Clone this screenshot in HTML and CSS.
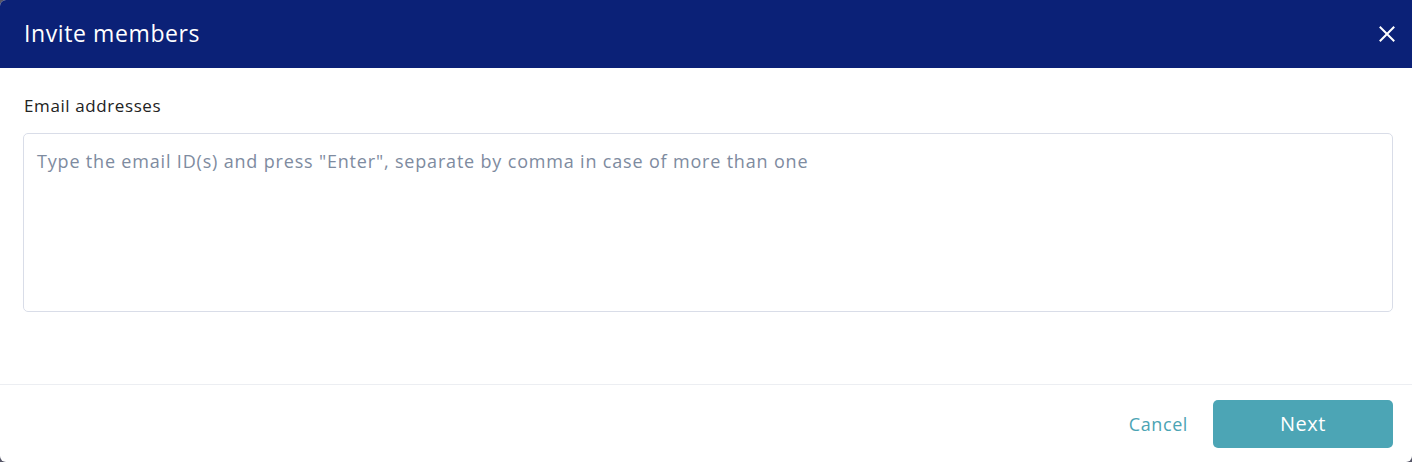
FILE: index.html
```html
<!DOCTYPE html>
<html lang="en">
<head>
    <meta charset="UTF-8">
    <title>Invite members</title>
    <link rel="stylesheet" href="styles.css">
</head>
<body>

<div class="modal">
    <div class="modal-header">
        <h1>Invite members</h1>
        <button class="close-btn" aria-label="Close">
            <svg width="16" height="16" viewBox="0 0 16 16">
                <path d="M1.5 1.5 L14.5 14.5 M14.5 1.5 L1.5 14.5" stroke="#fff" stroke-width="2" stroke-linecap="square"/>
            </svg>
        </button>
    </div>

    <div class="modal-body">
        <label class="field-label" for="emails">Email addresses</label>
        <textarea id="emails" class="email-box" placeholder="Type the email ID(s) and press &quot;Enter&quot;, separate by comma in case of more than one"></textarea>
    </div>

    <div class="modal-footer">
        <button class="btn-link">Cancel</button>
        <button class="btn-primary">Next</button>
    </div>
</div>

</body>
</html>
```

FILE: styles.css
```css
html, body {
    height: 100%;
}

body {
    margin: 0;
    background: #555566;
    font-family: "Open Sans", Lato, sans-serif;
}

.modal {
    height: 462px;
    background: #fff;
    border-radius: 6px 0 6px 6px;
    overflow: hidden;
    display: flex;
    flex-direction: column;
}

.modal-header {
    height: 68px;
    background: #0b2177;
    display: flex;
    align-items: center;
    justify-content: space-between;
    padding: 0 17px 0 24px;
}

.modal-header h1 {
    margin: 0 0 2px;
    color: #fff;
    font-size: 23px;
    font-weight: 400;
    letter-spacing: 0.6px;
}

.close-btn {
    background: none;
    border: 0;
    padding: 0;
    width: 16px;
    height: 16px;
    cursor: pointer;
}

.modal-body {
    padding: 27px 19px 0 23px;
    flex: 1;
    display: flex;
    flex-direction: column;
}

.field-label {
    font-size: 17px;
    color: #222;
    margin: 0 0 16px 1px;
    line-height: 22px;
    letter-spacing: 0.6px;
}

.email-box {
    height: 179px;
    box-sizing: border-box;
    border: 1px solid #d9dde8;
    border-radius: 5px;
    padding: 15px 13px;
    font-family: inherit;
    font-size: 18px;
    letter-spacing: 0.82px;
    color: #333;
    resize: none;
    outline: none;
}

.email-box::placeholder {
    color: #7e8ba0;
}

.modal-footer {
    height: 77px;
    border-top: 1px solid #eceef2;
    display: flex;
    align-items: center;
    justify-content: flex-end;
    gap: 25px;
    padding: 0 19px 0 24px;
}

.btn-link {
    background: none;
    border: 0;
    padding: 0;
    color: #4ba4b4;
    font-family: inherit;
    font-size: 18px;
    letter-spacing: 0.6px;
    cursor: pointer;
}

.btn-primary {
    width: 180px;
    height: 48px;
    background: #4ca5b5;
    border: 0;
    border-radius: 5px;
    color: #fff;
    font-family: inherit;
    font-size: 20px;
    letter-spacing: 0.5px;
    cursor: pointer;
}
```
